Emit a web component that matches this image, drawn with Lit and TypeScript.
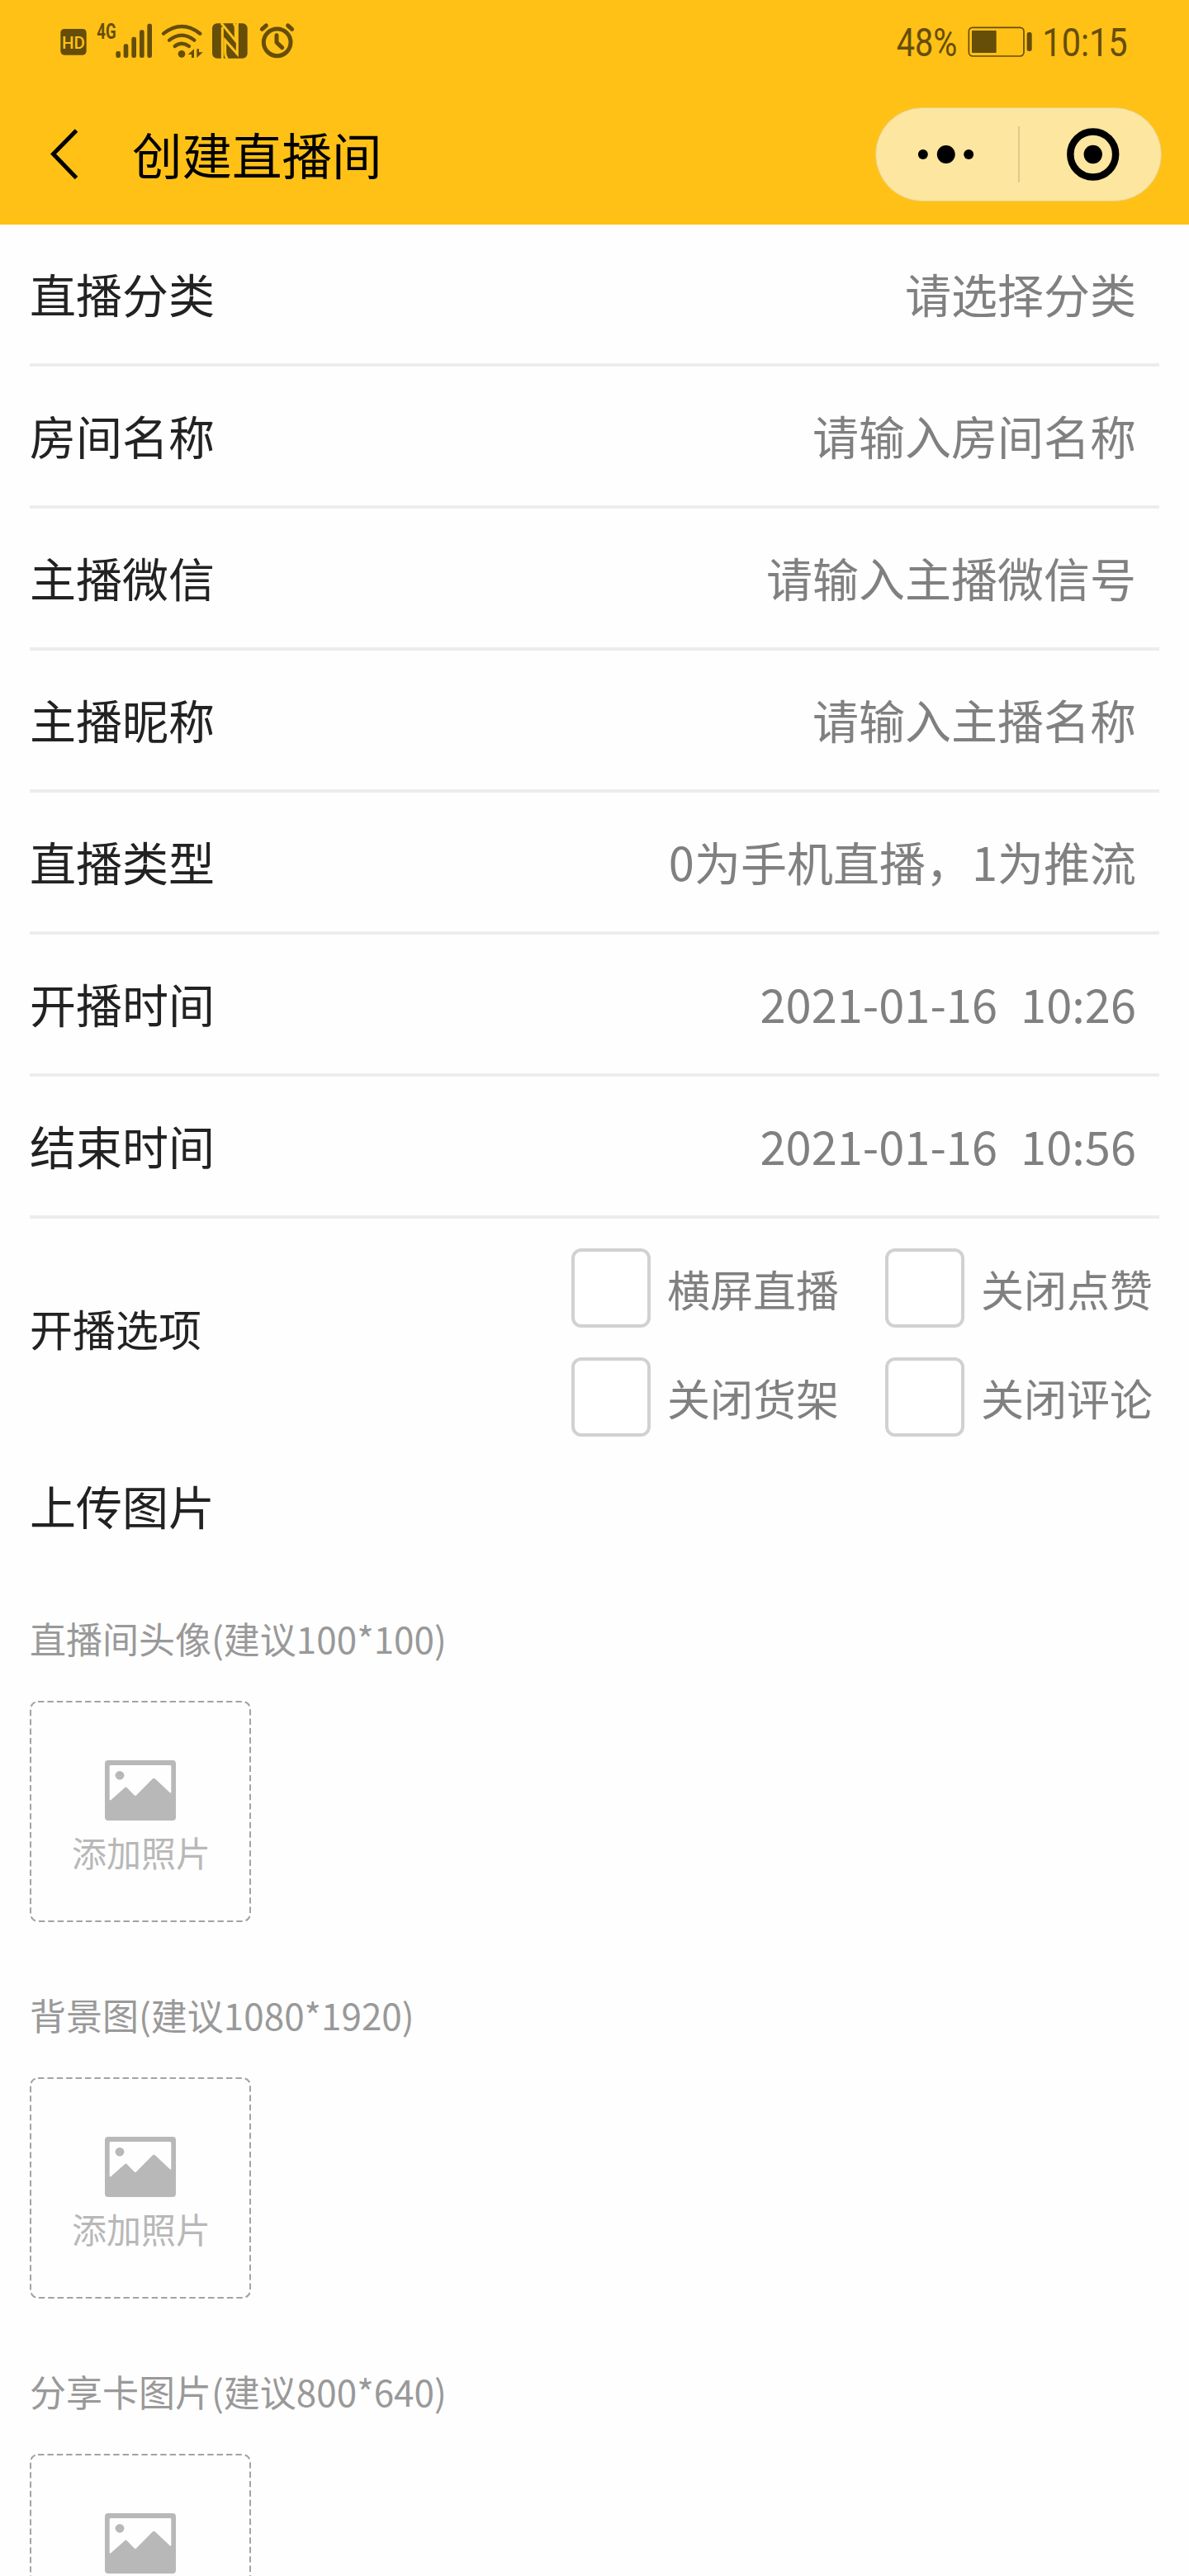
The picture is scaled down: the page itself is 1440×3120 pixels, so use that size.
import { LitElement, html, css, svg } from "lit";
import { customElement, property } from "lit/decorators.js";

const FONT = css`"Noto Sans CJK SC", "Noto Sans", sans-serif`;

@customElement("status-bar")
class StatusBar extends LitElement {
  static styles = css`
    :host {
      display: flex;
      justify-content: space-between;
      height: 100px;
      padding: 0 40px;
      box-sizing: border-box;
    }
    .icons {
      display: block;
      width: 360px;
      height: 100px;
    }
    .ink { fill: #664d08; }
    .line { fill: none; stroke: #664d08; stroke-linecap: round; stroke-linejoin: round; }
    .cut { fill: none; stroke: #ffc116; }
    .hd { font: 500 62px Roboto, sans-serif; fill: #ffc116; }
    .net { font: 700 78px Roboto, sans-serif; }
    .value { font: 400 142px Roboto, sans-serif; }
  `;

  render() {
    const bars = [
      [301, 186, 24],
      [329, 160, 50],
      [358, 134, 76],
      [387, 109, 101],
      [415, 86, 124],
    ];
    return html`
      <svg class="icons" viewBox="0 0 1080 300">
        <rect class="ink" x="100" y="105" width="94" height="95" rx="14" />
        <text class="hd" x="105" y="176" textLength="84" lengthAdjust="spacingAndGlyphs">HD</text>
        <text class="ink net" x="232" y="141" textLength="70" lengthAdjust="spacingAndGlyphs">4G</text>
        ${bars.map(([x, y, h]) => svg`<rect class="ink" x=${x} y=${y} width="17" height=${h} rx="7" />`)}
        <g class="line" stroke-width="13">
          <path d="M474 122 Q540 70 607 122" />
          <path d="M495 146 Q540 110 586 146" />
          <path d="M515 168 Q540 149 567 168" />
        </g>
        <circle class="ink" cx="540" cy="196" r="13" />
        <path class="ink" d="M563 198 L585 178 V210 H576 V198 Z M595 178 H603 V190 H617 L595 210 Z" />
        <rect class="ink" x="651" y="85" width="128" height="127" rx="18" />
        <path class="cut" stroke-width="9" d="M688 214 V98 M684 84 L736 148 V106 Q736 90 728 84" />
        <path class="cut" stroke-width="9" d="M742 84 V196 L698 146 V190 Q698 206 706 214" />
        <g class="line" stroke-width="15">
          <circle cx="887" cy="154" r="49" />
          <path d="M885 128 V154 L905 173" />
          <path d="M832 106 L847 93 M926 93 L941 106" />
        </g>
      </svg>
      <svg class="icons" viewBox="0 0 1080 300">
        <text class="ink value" x="137" y="205" textLength="221" lengthAdjust="spacingAndGlyphs">48%</text>
        <rect class="line" x="400" y="100" width="200" height="104" rx="14" stroke-width="5" />
        <rect class="ink" x="411" y="111" width="89" height="81" rx="3" />
        <rect class="ink" x="611" y="117" width="18" height="69" rx="8" />
        <text class="ink value" x="667" y="205" textLength="310" lengthAdjust="spacingAndGlyphs">10:15</text>
      </svg>
    `;
  }
}

@customElement("nav-bar")
class NavBar extends LitElement {
  @property() title = "";

  static styles = css`
    :host {
      display: flex;
      align-items: center;
      height: 172px;
      padding: 1px 33px 0 60px;
      box-sizing: border-box;
    }
    .back {
      width: 40px;
      height: 70px;
      margin-right: 60px;
    }
    .title {
      flex: 1;
      font: 400 60.5px/90px ${FONT};
      color: #000;
      padding-bottom: 2px;
    }
    .capsule {
      display: flex;
      align-items: center;
      width: 347px;
      height: 114px;
      box-sizing: border-box;
      border: 1px solid #e9cd7c;
      border-radius: 57px;
      background: #fde6a0;
    }
    .half { flex: 1; height: 68px; }
    .sep { width: 2px; height: 68px; background: #e0c98a; }
  `;

  render() {
    return html`
      <svg class="back" viewBox="0 0 40 70">
        <path d="M32.5 6 L4.5 34.5 L32.5 63.5" fill="none" stroke="#000" stroke-width="5" />
      </svg>
      <div class="title">${this.title}</div>
      <div class="capsule">
        <svg class="half" viewBox="0 0 172 68">
          <circle cx="57" cy="34" r="6" />
          <circle cx="85" cy="34" r="11" />
          <circle cx="112.500" cy="34" r="6" />
        </svg>
        <div class="sep"></div>
        <svg class="half" viewBox="0 0 172 68">
          <circle cx="89" cy="34" r="27.500" fill="none" stroke="#000" stroke-width="8.500" />
          <circle cx="89" cy="34" r="11.200" />
        </svg>
      </div>
    `;
  }
}

@customElement("check-option")
class CheckOption extends LitElement {
  @property() label = "";

  static styles = css`
    :host {
      display: flex;
      align-items: center;
      gap: 20px;
    }
    .box {
      width: 96px;
      height: 96px;
      box-sizing: border-box;
      border: 4px solid #d1d1d1;
      border-radius: 12px;
      background: #fff;
    }
    .label {
      font: 400 52px/76px ${FONT};
      color: #808080;
      padding-top: 2px;
    }
  `;

  render() {
    return html`<div class="box"></div><div class="label">${this.label}</div>`;
  }
}

@customElement("photo-upload")
class PhotoUpload extends LitElement {
  @property() label = "";

  static styles = css`
    :host {
      display: block;
      height: 456px;
    }
    .caption {
      font: 400 44px/64px ${FONT};
      color: #999;
    }
    .card {
      position: relative;
      display: flex;
      flex-direction: column;
      align-items: center;
      width: 268px;
      height: 268px;
      margin-top: 44px;
      padding-top: 72px;
      box-sizing: border-box;
    }
    .frame {
      position: absolute;
      inset: 0;
      width: 268px;
      height: 268px;
    }
    .dash {
      fill: none;
      stroke: #a3a3a3;
      stroke-width: 2;
      stroke-dasharray: 7.400 4;
    }
    .picture { width: 86px; height: 73px; }
    .add {
      font: 400 42px/60px ${FONT};
      color: #b8b8b8;
      margin-top: 8px;
      padding-left: 2px;
    }
  `;

  render() {
    return html`
      <div class="caption">${this.label}</div>
      <div class="card">
        <svg class="frame" viewBox="0 0 268 268">
          <rect class="dash" x="1" y="1" width="266" height="266" rx="9" />
        </svg>
        <svg class="picture" viewBox="0 0 86 73">
          <path
            fill="#b8b8b8"
            fill-rule="evenodd"
            d="M4 0 H82 A4 4 0 0 1 86 4 V69 A4 4 0 0 1 82 73 H4 A4 4 0 0 1 0 69 V4 A4 4 0 0 1 4 0 Z
               M7 6 Q5.700 6 5.700 7.300 V48 Q6.500 49 8 47.500 L23.800 33.600 Q25.400 31.500 27 33.600 L35.500 42.300 Q36.800 43.800 38.200 42.300 L57.700 22.600 Q59.300 20.800 61 22.600 L78.500 39 Q79.500 40 80.300 39 V7.300 Q80.300 6 79 6 Z"
          />
          <circle cx="18" cy="18.300" r="5.400" fill="#b8b8b8" />
        </svg>
        <div class="add">添加照片</div>
      </div>
    `;
  }
}

@customElement("app-root")
class AppRoot extends LitElement {
  static styles = css`
    :host {
      display: block;
      width: 1440px;
      height: 3120px;
      overflow: hidden;
      background: #fefefe;
      font-family: ${FONT};
    }
    .header { background: #ffc116; }
    .form { padding: 0 36px; }
    .row {
      display: flex;
      justify-content: space-between;
      align-items: center;
      height: 172px;
      box-sizing: border-box;
      border-bottom: 4px solid #ededed;
      padding: 0 28px 2px 0;
      font-size: 56px;
      line-height: 82px;
    }
    .name { color: #222; }
    .value { color: #808080; white-space: pre; word-spacing: 1.5px; }
    .options {
      display: flex;
      justify-content: space-between;
      align-items: center;
      padding: 36px 8px 0 0;
    }
    .options .name { font-size: 52px; line-height: 76px; margin-top: -34px; }
    .checks {
      display: grid;
      grid-template-columns: auto auto;
      gap: 36px 56px;
    }
    .section {
      font-size: 56px;
      line-height: 82px;
      margin: 42px 0 88px;
    }
  `;

  private rows = [
    ["直播分类", "请选择分类"],
    ["房间名称", "请输入房间名称"],
    ["主播微信", "请输入主播微信号"],
    ["主播昵称", "请输入主播名称"],
    ["直播类型", "0为手机直播，1为推流"],
    ["开播时间", "2021-01-16  10:26"],
    ["结束时间", "2021-01-16  10:56"],
  ];

  private options = ["横屏直播", "关闭点赞", "关闭货架", "关闭评论"];

  private uploads = ["直播间头像(建议100*100)", "背景图(建议1080*1920)", "分享卡图片(建议800*640)"];

  render() {
    return html`
      <div class="header">
        <status-bar></status-bar>
        <nav-bar title="创建直播间"></nav-bar>
      </div>
      <div class="form">
        ${this.rows.map(
          ([name, value]) => html`
            <div class="row"><span class="name">${name}</span><span class="value">${value}</span></div>
          `,
        )}
        <div class="options">
          <div class="name">开播选项</div>
          <div class="checks">
            ${this.options.map((o) => html`<check-option label=${o}></check-option>`)}
          </div>
        </div>
        <div class="section name">上传图片</div>
        ${this.uploads.map((u) => html`<photo-upload label=${u}></photo-upload>`)}
      </div>
    `;
  }
}
